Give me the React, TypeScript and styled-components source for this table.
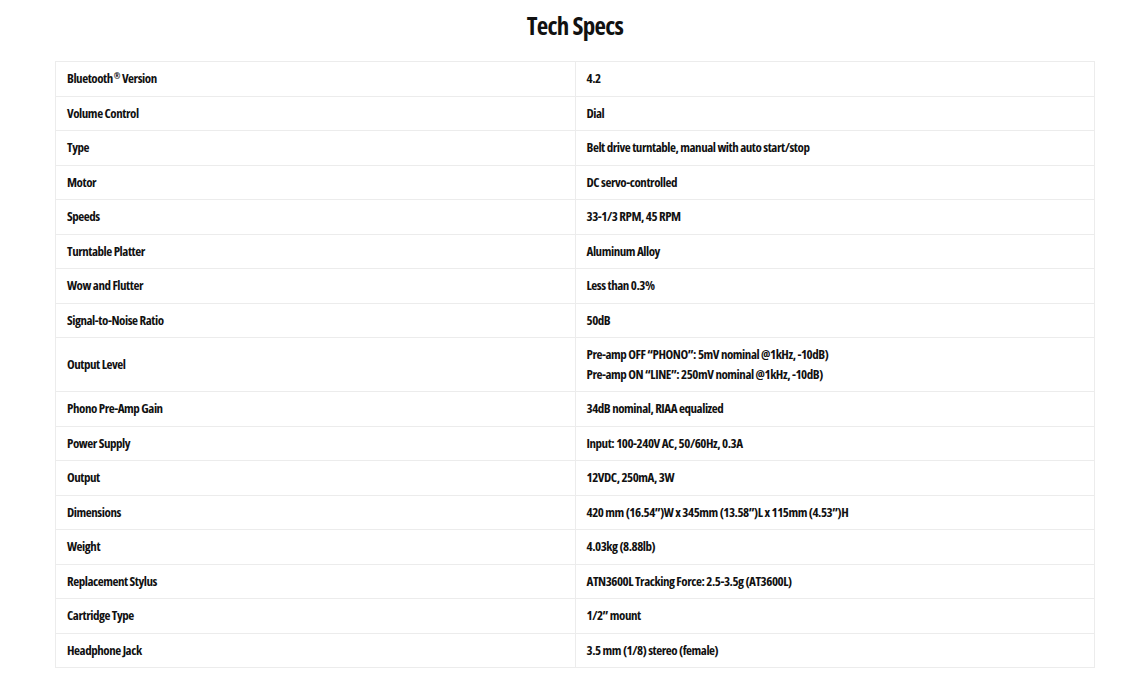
import type { ReactNode } from "react"
import styled, { createGlobalStyle } from "styled-components"

const GlobalStyle = createGlobalStyle`
  html, body {
    margin: 0;
    padding: 0;
    background: #fff;
  }
  body {
    font-family: "Open Sans", "DejaVu Sans Condensed", sans-serif;
    font-stretch: 75%;
    color: #111;
  }
`

const Mark = styled.sup`
  font-size: 8px;
  line-height: 0;
  vertical-align: 4px;
  margin-left: 1px;
`

interface Spec {
  id: string
  label: ReactNode
  value: string[]
}

const specs: Spec[] = [
  { id: "bt", label: <>Bluetooth<Mark>®</Mark> Version</>, value: ["4.2"] },
  { id: "vol", label: "Volume Control", value: ["Dial"] },
  { id: "type", label: "Type", value: ["Belt drive turntable, manual with auto start/stop"] },
  { id: "motor", label: "Motor", value: ["DC servo-controlled"] },
  { id: "speeds", label: "Speeds", value: ["33-1/3 RPM, 45 RPM"] },
  { id: "platter", label: "Turntable Platter", value: ["Aluminum Alloy"] },
  { id: "wow", label: "Wow and Flutter", value: ["Less than 0.3%"] },
  { id: "snr", label: "Signal-to-Noise Ratio", value: ["50dB"] },
  {
    id: "level",
    label: "Output Level",
    value: [
      "Pre-amp OFF “PHONO”: 5mV nominal @1kHz, -10dB)",
      "Pre-amp ON “LINE”: 250mV nominal @1kHz, -10dB)",
    ],
  },
  { id: "gain", label: "Phono Pre-Amp Gain", value: ["34dB nominal, RIAA equalized"] },
  { id: "power", label: "Power Supply", value: ["Input: 100-240V AC, 50/60Hz, 0.3A"] },
  { id: "output", label: "Output", value: ["12VDC, 250mA, 3W"] },
  { id: "dim", label: "Dimensions", value: ["420 mm (16.54”)W x 345mm (13.58”)L x 115mm (4.53”)H"] },
  { id: "weight", label: "Weight", value: ["4.03kg (8.88lb)"] },
  { id: "stylus", label: "Replacement Stylus", value: ["ATN3600L Tracking Force: 2.5-3.5g (AT3600L)"] },
  { id: "cart", label: "Cartridge Type", value: ["1/2” mount"] },
  { id: "jack", label: "Headphone Jack", value: ["3.5 mm (1/8) stereo (female)"] },
]

function App() {
  return (
    <Page>
      <GlobalStyle />
      <Title>Tech Specs</Title>
      <SpecTable>
        <tbody>
          {specs.map(({ id, label, value }) => (
            <Row key={id}>
              <Cell>{label}</Cell>
              <Cell>
                {value.map((line) => (
                  <Line key={line}>{line}</Line>
                ))}
              </Cell>
            </Row>
          ))}
        </tbody>
      </SpecTable>
    </Page>
  )
}

const Page = styled.main`
  width: 1040px;
  margin: 0 0 0 55px;
  padding: 8px 0 32px;
`

const Title = styled.h2`
  margin: 0 0 19px;
  font-size: 25px;
  line-height: 34px;
  font-weight: 700;
  text-align: center;
  letter-spacing: -0.7px;
`

const SpecTable = styled.table`
  width: 100%;
  border-collapse: collapse;
  table-layout: fixed;
  border: 1px solid #ececec;
`

const Row = styled.tr`
  border-top: 1px solid #ececec;
`

const Cell = styled.td`
  padding: 7px 11px;
  font-size: 13px;
  line-height: 19.5px;
  font-weight: 700;
  letter-spacing: -0.45px;
  vertical-align: middle;

  &:first-child {
    border-right: 1px solid #ececec;
  }
`

const Line = styled.div``

export default App
